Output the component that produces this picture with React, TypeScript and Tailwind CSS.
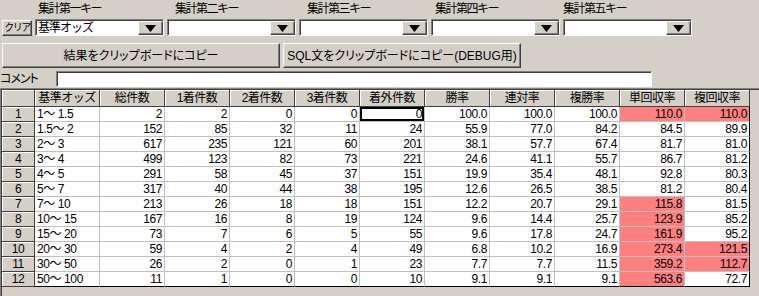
const font = "font-['Liberation_Sans','Noto_Sans_CJK_JP',sans-serif]";

const raised =
  "border border-t-white border-l-white border-r-[#404040] border-b-[#404040] shadow-[inset_-1px_-1px_0_#808080]";
const sunken =
  "border border-t-[#808080] border-l-[#808080] border-r-white border-b-white";

const keys = [
  { label: "集計第一キー", value: "基準オッズ" },
  { label: "集計第二キー", value: "" },
  { label: "集計第三キー", value: "" },
  { label: "集計第四キー", value: "" },
  { label: "集計第五キー", value: "" },
];

const labelBoxes = ["w-[137px]", "w-[132px]", "w-[128px]", "w-[128px]", "w-[128px]"];

const headers = [
  "基準オッズ", "総件数", "1着件数", "2着件数", "3着件数", "着外件数",
  "勝率", "連対率", "複勝率", "単回収率", "複回収率",
];

const rows: string[][] = [
  ["1～ 1.5", "2", "2", "0", "0", "0", "100.0", "100.0", "100.0", "110.0", "110.0"],
  ["1.5～ 2", "152", "85", "32", "11", "24", "55.9", "77.0", "84.2", "84.5", "89.9"],
  ["2～ 3", "617", "235", "121", "60", "201", "38.1", "57.7", "67.4", "81.7", "81.0"],
  ["3～ 4", "499", "123", "82", "73", "221", "24.6", "41.1", "55.7", "86.7", "81.2"],
  ["4～ 5", "291", "58", "45", "37", "151", "19.9", "35.4", "48.1", "92.8", "80.3"],
  ["5～ 7", "317", "40", "44", "38", "195", "12.6", "26.5", "38.5", "81.2", "80.4"],
  ["7～ 10", "213", "26", "18", "18", "151", "12.2", "20.7", "29.1", "115.8", "81.5"],
  ["10～ 15", "167", "16", "8", "19", "124", "9.6", "14.4", "25.7", "123.9", "85.2"],
  ["15～ 20", "73", "7", "6", "5", "55", "9.6", "17.8", "24.7", "161.9", "95.2"],
  ["20～ 30", "59", "4", "2", "4", "49", "6.8", "10.2", "16.9", "273.4", "121.5"],
  ["30～ 50", "26", "2", "0", "1", "23", "7.7", "7.7", "11.5", "359.2", "112.7"],
  ["50～ 100", "11", "1", "0", "0", "10", "9.1", "9.1", "9.1", "563.6", "72.7"],
];

// 回収率が100を超えるセルは赤系で塗る
const isHot = (col: number, v: string) => col >= 9 && parseFloat(v) > 100;

const DropArrow = () => (
  <svg width="11" height="7" viewBox="0 0 11 7">
    <polygon points="0,0 11,0 5.5,7" fill="#000" />
  </svg>
);

const Combo = ({ value }: { value: string }) => (
  <div className={`flex w-[129px] h-[17px] ${sunken} shadow-[inset_1px_1px_0_#404040]`}>
    <div className="flex-1 bg-white mt-[1px] ml-[1px] px-[1px] text-[12px] leading-[14px] tracking-[-1px] whitespace-nowrap">
      {value}
    </div>
    <div className={`w-[25px] mt-[1px] bg-[#d4d0c8] flex items-center justify-center ${raised}`}>
      <DropArrow />
    </div>
  </div>
);

const FixedCell = ({ children }: { children?: string }) => (
  <div className="bg-[#d4d0c8] border-r border-b border-[#404040] shadow-[inset_1px_1px_0_#fff] flex items-center justify-center text-[12px] leading-[14px] tracking-[-0.5px] whitespace-nowrap">
    {children}
  </div>
);

const App = () => {
  return (
    <div className={`w-[759px] h-[296px] overflow-hidden bg-[#d4d0c8] text-black ${font}`}>
      {/* キー選択 */}
      <div className="flex h-[18px] pt-[2px] text-[12px] leading-[14px] tracking-[-1.5px]">
        <div className="w-[38px]" />
        {keys.map((k, i) => (
          <div key={k.label} className={labelBoxes[i]}>{k.label}</div>
        ))}
      </div>
      <div className="flex mt-[1px] h-[17px]">
        <div className={`ml-[2px] mt-[1px] w-[30px] h-[16px] bg-[#d4d0c8] flex items-center justify-center text-[10px] leading-none tracking-[-1.5px] whitespace-nowrap ${raised}`}>
          クリア
        </div>
        <div className="flex gap-[3px] ml-[3px]">
          {keys.map((k) => (
            <Combo key={k.label} value={k.value} />
          ))}
        </div>
      </div>

      {/* コピー ボタン */}
      <div className="flex gap-[3px] mt-[7px] ml-[2px] h-[25px] text-[12px] [font-feature-settings:'palt'] whitespace-nowrap">
        <div className={`w-[278px] flex items-center justify-center bg-[#d4d0c8] ${raised}`}>
          結果をクリップボードにコピー
        </div>
        <div className={`w-[238px] flex items-center justify-center bg-[#d4d0c8] ${raised}`}>
          SQL文をクリップボードにコピー(DEBUG用)
        </div>
      </div>

      {/* コメント */}
      <div className="flex items-center mt-[3px] h-[16px]">
        <div className="w-[56px] text-[12px] leading-none [font-feature-settings:'palt'] tracking-[-1px]">コメント</div>
        <div className={`w-[596px] h-[16px] bg-white ${sunken} shadow-[inset_1px_1px_0_#404040]`} />
      </div>

      {/* 集計結果グリッド */}
      <div className="mt-[1px] h-[209px] border-t border-l border-[#808080]">
        <div className="h-full border-t border-l border-[#404040]">
          <div className="grid grid-cols-[33px_repeat(11,65px)] grid-rows-[17px_repeat(12,15px)] w-fit">
            <FixedCell />
            {headers.map((h) => (
              <FixedCell key={h}>{h}</FixedCell>
            ))}
            {rows.map((r, ri) => (
              <>
                <FixedCell key={`h${ri}`}>{String(ri + 1)}</FixedCell>
                {r.map((v, ci) => {
                  const hot = isHot(ci, v);
                  const focused = ri === 0 && ci === 5;
                  const lastCol = ci === r.length - 1;
                  const lastRow = ri === rows.length - 1;
                  return (
                    <div
                      key={`${ri}-${ci}`}
                      className={[
                        "border-r border-b border-[#c0c0c0] text-[12px] leading-[14px] tracking-[-0.4px] whitespace-nowrap overflow-hidden",
                        ci === 0 ? "text-left pl-[2px]" : "text-right pr-[2px]",
                        hot ? "bg-[#ff8080]" : "bg-white",
                        focused ? "shadow-[inset_0_0_0_2px_#000]" : "",
                        lastCol ? "border-r-black" : "",
                        lastRow ? "border-b-black" : "",
                      ].join(" ")}
                    >
                      {v}
                    </div>
                  );
                })}
              </>
            ))}
          </div>
        </div>
      </div>
    </div>
  );
};

export default App;
